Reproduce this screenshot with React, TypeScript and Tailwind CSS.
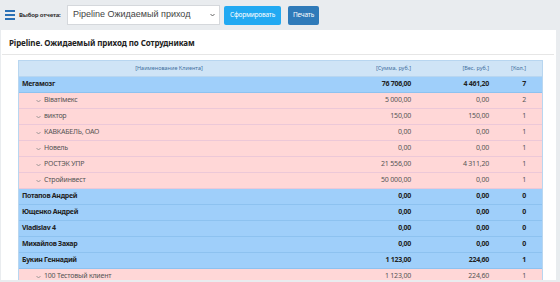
import React from "react";

interface Row {
  name: string;
  sum: string;
  weight: string;
  count: string;
  group?: boolean;
}

const ROWS: Row[] = [
  { name: "Мегамозг", sum: "76 706,00", weight: "4 461,20", count: "7", group: true },
  { name: "Вiватiмекс", sum: "5 000,00", weight: "0,00", count: "2" },
  { name: "виктор", sum: "150,00", weight: "150,00", count: "1" },
  { name: "КАВКАБЕЛЬ, ОАО", sum: "0,00", weight: "0,00", count: "1" },
  { name: "Новель", sum: "0,00", weight: "0,00", count: "1" },
  { name: "РОСТЭК УПР", sum: "21 556,00", weight: "4 311,20", count: "1" },
  { name: "Стройинвест", sum: "50 000,00", weight: "0,00", count: "1" },
  { name: "Потапов Андрей", sum: "0,00", weight: "0,00", count: "0", group: true },
  { name: "Ющенко Андрей", sum: "0,00", weight: "0,00", count: "0", group: true },
  { name: "Vladislav 4", sum: "0,00", weight: "0,00", count: "0", group: true },
  { name: "Михайлов Захар", sum: "0,00", weight: "0,00", count: "0", group: true },
  { name: "Букин Геннадий", sum: "1 123,00", weight: "224,60", count: "1", group: true },
  { name: "100 Тестовый клиент", sum: "1 123,00", weight: "224,60", count: "1" },
];

const COLS = "grid grid-cols-[1fr_95px_78px_50px]";
const SANS = { fontFamily: '"Noto Sans", "Open Sans", sans-serif' };

function Chevron() {
  return (
    <svg width="5" height="4" viewBox="0 0 5 4" className="mr-[3px] mt-[1px]">
      <path d="M0.5 1 L2.5 3 L4.5 1" fill="none" stroke="#888" strokeWidth="0.8" />
    </svg>
  );
}

export default function App() {
  return (
    <div
      className="w-[560px] h-[282px] bg-[#e9ecef] overflow-hidden text-[#333]"
      style={{ fontFamily: '"Liberation Sans", Arial, sans-serif' }}
    >
      {/* Toolbar */}
      <div className="h-[30px] flex items-center pl-[5px]" style={SANS}>
        <div className="flex flex-col gap-[2px] w-[10px] mr-[4px]">
          <span className="h-[2px] bg-[#2a70b5]" />
          <span className="h-[2px] bg-[#2a70b5]" />
          <span className="h-[2px] bg-[#2a70b5]" />
        </div>
        <span className="text-[6px] font-bold text-[#333] w-[48px] tracking-[-0.2px] whitespace-nowrap">
          Выбор отчета:
        </span>
        <div
          className="w-[153px] h-[20px] bg-white border border-[#d5d8dc] flex items-center justify-between pl-[5px] pr-[4px]"
          style={{ fontFamily: '"Liberation Sans", Arial, sans-serif' }}
        >
          <span className="text-[9px] text-[#444] whitespace-nowrap">Pipeline Ожидаемый приход</span>
          <svg width="5" height="4" viewBox="0 0 5 4">
            <path d="M0.5 1 L2.5 3 L4.5 1" fill="none" stroke="#555" strokeWidth="0.9" />
          </svg>
        </div>
        <button className="ml-[4px] w-[57px] h-[19px] bg-[#21a9f2] rounded-[2px] text-white text-[6.5px] tracking-[-0.2px] flex items-center justify-center">
          Сформировать
        </button>
        <button className="ml-[7px] w-[31px] h-[19px] bg-[#2f7ab9] rounded-[2px] text-white text-[6.5px] tracking-[-0.2px] flex items-center justify-center">
          Печать
        </button>
      </div>

      {/* Panel */}
      <div className="ml-[1px] w-[555px] h-[250px] bg-white overflow-hidden" style={SANS}>
        <div className="mx-[1px] border-b border-[#e6e6e6] h-[25px] flex items-center pl-[7px] pt-[2px] w-[552px]">
          <h1 className="text-[8px] font-bold text-[#222] tracking-[-0.1px] whitespace-nowrap">
            Pipeline. Ожидаемый приход по Сотрудникам
          </h1>
        </div>

        <div className="ml-[17px] mt-[5px] w-[525px] border-x border-[#b8d6f0]">
          {/* header */}
          <div className={`${COLS} h-[17px] bg-[#cfe4f6] border-y border-[#b8d6f0] items-center text-[5.5px] text-[#3f6f9e]`}>
            <div className="text-center">[Наименование Клиента]</div>
            <div className="text-right pr-[3px]">[Сумма, руб.]</div>
            <div className="text-right pr-[3px]">[Вес, руб.]</div>
            <div className="text-right pr-[16px]">[Кол.]</div>
          </div>

          {ROWS.map((r, i) =>
            r.group ? (
              <div
                key={i}
                className={`${COLS} h-[16px] bg-[#9fcffa] border-b border-[#8dc2f0] items-center text-[7px] tracking-[-0.3px] font-bold text-[#222]`}
              >
                <div className="pl-[3px] whitespace-nowrap">{r.name}</div>
                <div className="text-right pr-[3px]">{r.sum}</div>
                <div className="text-right pr-[3px]">{r.weight}</div>
                <div className="text-right pr-[16px]">{r.count}</div>
              </div>
            ) : (
              <div
                key={i}
                className={`${COLS} h-[16px] bg-[#ffd7d7] border-b border-[#ecc8d8] items-center text-[7px] tracking-[-0.2px] text-[#555]`}
              >
                <div className="pl-[17px] whitespace-nowrap flex items-center">
                  <Chevron />
                  {r.name}
                </div>
                <div className="text-right pr-[3px]">{r.sum}</div>
                <div className="text-right pr-[3px]">{r.weight}</div>
                <div className="text-right pr-[16px]">{r.count}</div>
              </div>
            )
          )}
        </div>
      </div>
    </div>
  );
}
